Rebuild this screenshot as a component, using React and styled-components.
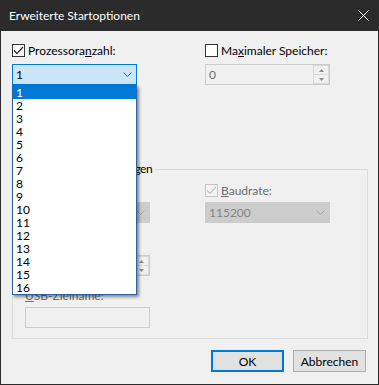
import styled, { createGlobalStyle } from "styled-components";

const GlobalStyle = createGlobalStyle`
  html, body {
    margin: 0;
    padding: 0;
    background: #ffffff;
  }

  body {
    font-family: Lato, "Liberation Sans", "DejaVu Sans", sans-serif;
    font-size: 12px;
    color: #000000;
  }

  *, *::before, *::after {
    box-sizing: border-box;
  }
`;

const Window = styled.div`
  width: 379px;
  height: 385px;
  display: flex;
  flex-direction: column;
  background: #f0f0f0;
  border: 1px solid #2b2b2b;
  border-top: none;
`;

const TitleBar = styled.div`
  height: 31px;
  flex-shrink: 0;
  margin: 0 -1px;
  padding: 0 10px 0 9px;
  display: flex;
  align-items: center;
  justify-content: space-between;
  background: #2b2b2b;
  color: #ffffff;
`;

const Title = styled.span`
  font-size: 12px;
  line-height: 15px;
`;

const Body = styled.div`
  flex: 1;
  display: flex;
  flex-direction: column;
  padding: 12px 10px 0 11px;
`;

const Columns = styled.div`
  display: grid;
  grid-template-columns: ${(props) => props.left}px 1fr;
  align-items: start;
`;

const Column = styled.div`
  display: flex;
  flex-direction: column;
  align-items: flex-start;
`;

const CheckRow = styled.label`
  display: flex;
  align-items: center;
  gap: 3px;
  height: 15px;
  margin-top: ${(props) => props.$top || 0}px;
  line-height: 15px;
  white-space: nowrap;
  color: ${(props) => (props.$disabled ? "#6d6d6d" : "#000000")};
`;

const Box = styled.span`
  width: 13px;
  height: 13px;
  flex-shrink: 0;
  display: flex;
  align-items: center;
  justify-content: center;
  border: 1px solid ${(props) => (props.$disabled ? "#c6c6c6" : "#333333")};
  background: ${(props) => (props.$disabled ? "#f4f4f4" : "#ffffff")};
`;

const Caption = styled.span`
  display: block;
  height: 15px;
  line-height: 15px;
  margin-top: ${(props) => props.$top || 0}px;
  white-space: nowrap;
  color: ${(props) => (props.$disabled ? "#6d6d6d" : "#000000")};
`;

const FieldWrap = styled.div`
  position: relative;
  width: 125px;
  margin-top: ${(props) => props.$top || 0}px;
`;

const ComboBox = styled.div`
  height: 21px;
  display: flex;
  align-items: center;
  justify-content: space-between;
  padding: 0 4px 0 3px;
  border: 1px solid ${(props) => (props.$focused ? "#0078d7" : "#cccccc")};
  background: ${(props) => (props.$focused ? "#cce4f7" : "#cccccc")};
  color: ${(props) => (props.$disabled ? "#838383" : "#000000")};
`;

const TextBox = styled.div`
  height: 21px;
  display: flex;
  align-items: stretch;
  border: 1px solid #cccccc;
  background: #f0f0f0;
  color: #6d6d6d;
`;

const TextValue = styled.span`
  flex: 1;
  padding-left: 3px;
  line-height: 19px;
`;

const SpinButtons = styled.div`
  width: 16px;
  display: flex;
  flex-direction: column;
`;

const SpinButton = styled.span`
  flex: 1;
  display: flex;
  align-items: center;
  justify-content: center;
  border: 1px solid #d9d9d9;
  background: #f0f0f0;

  & + & {
    border-top: none;
  }
`;

const DropList = styled.ul`
  position: absolute;
  top: 100%;
  left: 0;
  width: 125px;
  margin: 0;
  padding: 0;
  list-style: none;
  background: #ffffff;
  border: 1px solid #2a64a8;
  box-shadow: 2px 2px 3px rgba(0, 0, 0, 0.45);
  z-index: 10;
`;

const DropItem = styled.li`
  height: 13px;
  line-height: 13px;
  padding-left: 3px;
  background: ${(props) => (props.$selected ? "#0078d7" : "transparent")};
  color: ${(props) => (props.$selected ? "#ffffff" : "#000000")};
`;

const Group = styled.fieldset`
  margin: 26px 0 0;
  padding: 0 12px 10px;
  min-width: 0;
  border: 1px solid #dcdcdc;
`;

const Legend = styled.legend`
  margin-left: -10px;
  padding: 0 3px 0 2px;
  line-height: 14px;
  letter-spacing: -0.5px;
  white-space: nowrap;
`;

const GroupColumns = styled(Columns)`
  margin-top: 7px;
`;

const ButtonRow = styled.div`
  display: flex;
  justify-content: flex-end;
  gap: 9px;
  margin-top: 11px;
  padding-right: 2px;
`;

const Button = styled.button`
  width: 73px;
  height: 22px;
  padding: 0;
  font-family: inherit;
  font-size: 12px;
  color: #000000;
  background: #e1e1e1;
  border: ${(props) => (props.$default ? "2px solid #0078d7" : "1px solid #adadad")};
`;

function CheckBox({ checked, disabled }) {
  return (
    <Box $disabled={disabled}>
      {checked && (
        <svg width="11" height="11" viewBox="0 0 11 11">
          <polyline
            points="1,5.5 4,8.5 10,2"
            fill="none"
            stroke={disabled ? "#c2c2c2" : "#222222"}
            strokeWidth="1.2"
          />
        </svg>
      )}
    </Box>
  );
}

function Chevron({ color }) {
  return (
    <svg width="9" height="5" viewBox="0 0 9 5">
      <polyline points="0.5,0.5 4.5,4.5 8.5,0.5" fill="none" stroke={color} strokeWidth="1" />
    </svg>
  );
}

function Arrow({ up }) {
  return (
    <svg width="5" height="3" viewBox="0 0 5 3">
      <polygon points={up ? "0,3 2.5,0 5,3" : "0,0 2.5,3 5,0"} fill="#8a8a8a" />
    </svg>
  );
}

function Spinner({ value, top }) {
  return (
    <FieldWrap $top={top}>
      <TextBox>
        <TextValue>{value}</TextValue>
        <SpinButtons>
          <SpinButton>
            <Arrow up />
          </SpinButton>
          <SpinButton>
            <Arrow />
          </SpinButton>
        </SpinButtons>
      </TextBox>
    </FieldWrap>
  );
}

const processors = Array.from({ length: 16 }, (_, i) => i + 1);

export default function App() {
  return (
    <>
      <GlobalStyle />
      <Window>
        <TitleBar>
          <Title>Erweiterte Startoptionen</Title>
          <svg width="11" height="11" viewBox="0 0 11 11">
            <path d="M0.5 0.5 L10.5 10.5 M10.5 0.5 L0.5 10.5" stroke="#ffffff" strokeWidth="1" />
          </svg>
        </TitleBar>

        <Body>
          <Columns left={193}>
            <Column>
              <CheckRow>
                <CheckBox checked />
                <span>
                  Prozessora<u>n</u>zahl:
                </span>
              </CheckRow>
              <FieldWrap $top={6}>
                <ComboBox $focused>
                  <span>1</span>
                  <Chevron color="#5a5a5a" />
                </ComboBox>
                <DropList>
                  {processors.map((n) => (
                    <DropItem key={n} $selected={n === 1}>
                      {n}
                    </DropItem>
                  ))}
                </DropList>
              </FieldWrap>
              <CheckRow $top={14}>
                <CheckBox />
                <span>
                  <u>P</u>CI sperren
                </span>
              </CheckRow>
              <CheckRow $top={7}>
                <CheckBox />
                <span>
                  <u>D</u>ebuggen
                </span>
              </CheckRow>
            </Column>

            <Column>
              <CheckRow>
                <CheckBox />
                <span>
                  Ma<u>x</u>imaler Speicher:
                </span>
              </CheckRow>
              <Spinner value="0" top={6} />
            </Column>
          </Columns>

          <Group>
            <Legend>Globale Debugeinstellungen</Legend>
            <GroupColumns left={180}>
              <Column>
                <CheckRow $disabled>
                  <CheckBox checked disabled />
                  <span>
                    D<u>e</u>buganschluss:
                  </span>
                </CheckRow>
                <FieldWrap $top={4}>
                  <ComboBox $disabled>
                    <span>COM1:</span>
                    <Chevron color="#a8a8a8" />
                  </ComboBox>
                </FieldWrap>
                <Caption $top={13} $disabled>
                  <u>K</u>anal:
                </Caption>
                <Spinner value="0" top={4} />
                <Caption $top={12} $disabled>
                  <u>U</u>SB-Zielname:
                </Caption>
                <FieldWrap $top={4}>
                  <TextBox />
                </FieldWrap>
              </Column>

              <Column>
                <CheckRow $disabled>
                  <CheckBox checked disabled />
                  <span>
                    <u>B</u>audrate:
                  </span>
                </CheckRow>
                <FieldWrap $top={4}>
                  <ComboBox $disabled>
                    <span>115200</span>
                    <Chevron color="#a8a8a8" />
                  </ComboBox>
                </FieldWrap>
              </Column>
            </GroupColumns>
          </Group>

          <ButtonRow>
            <Button $default>OK</Button>
            <Button>Abbrechen</Button>
          </ButtonRow>
        </Body>
      </Window>
    </>
  );
}
